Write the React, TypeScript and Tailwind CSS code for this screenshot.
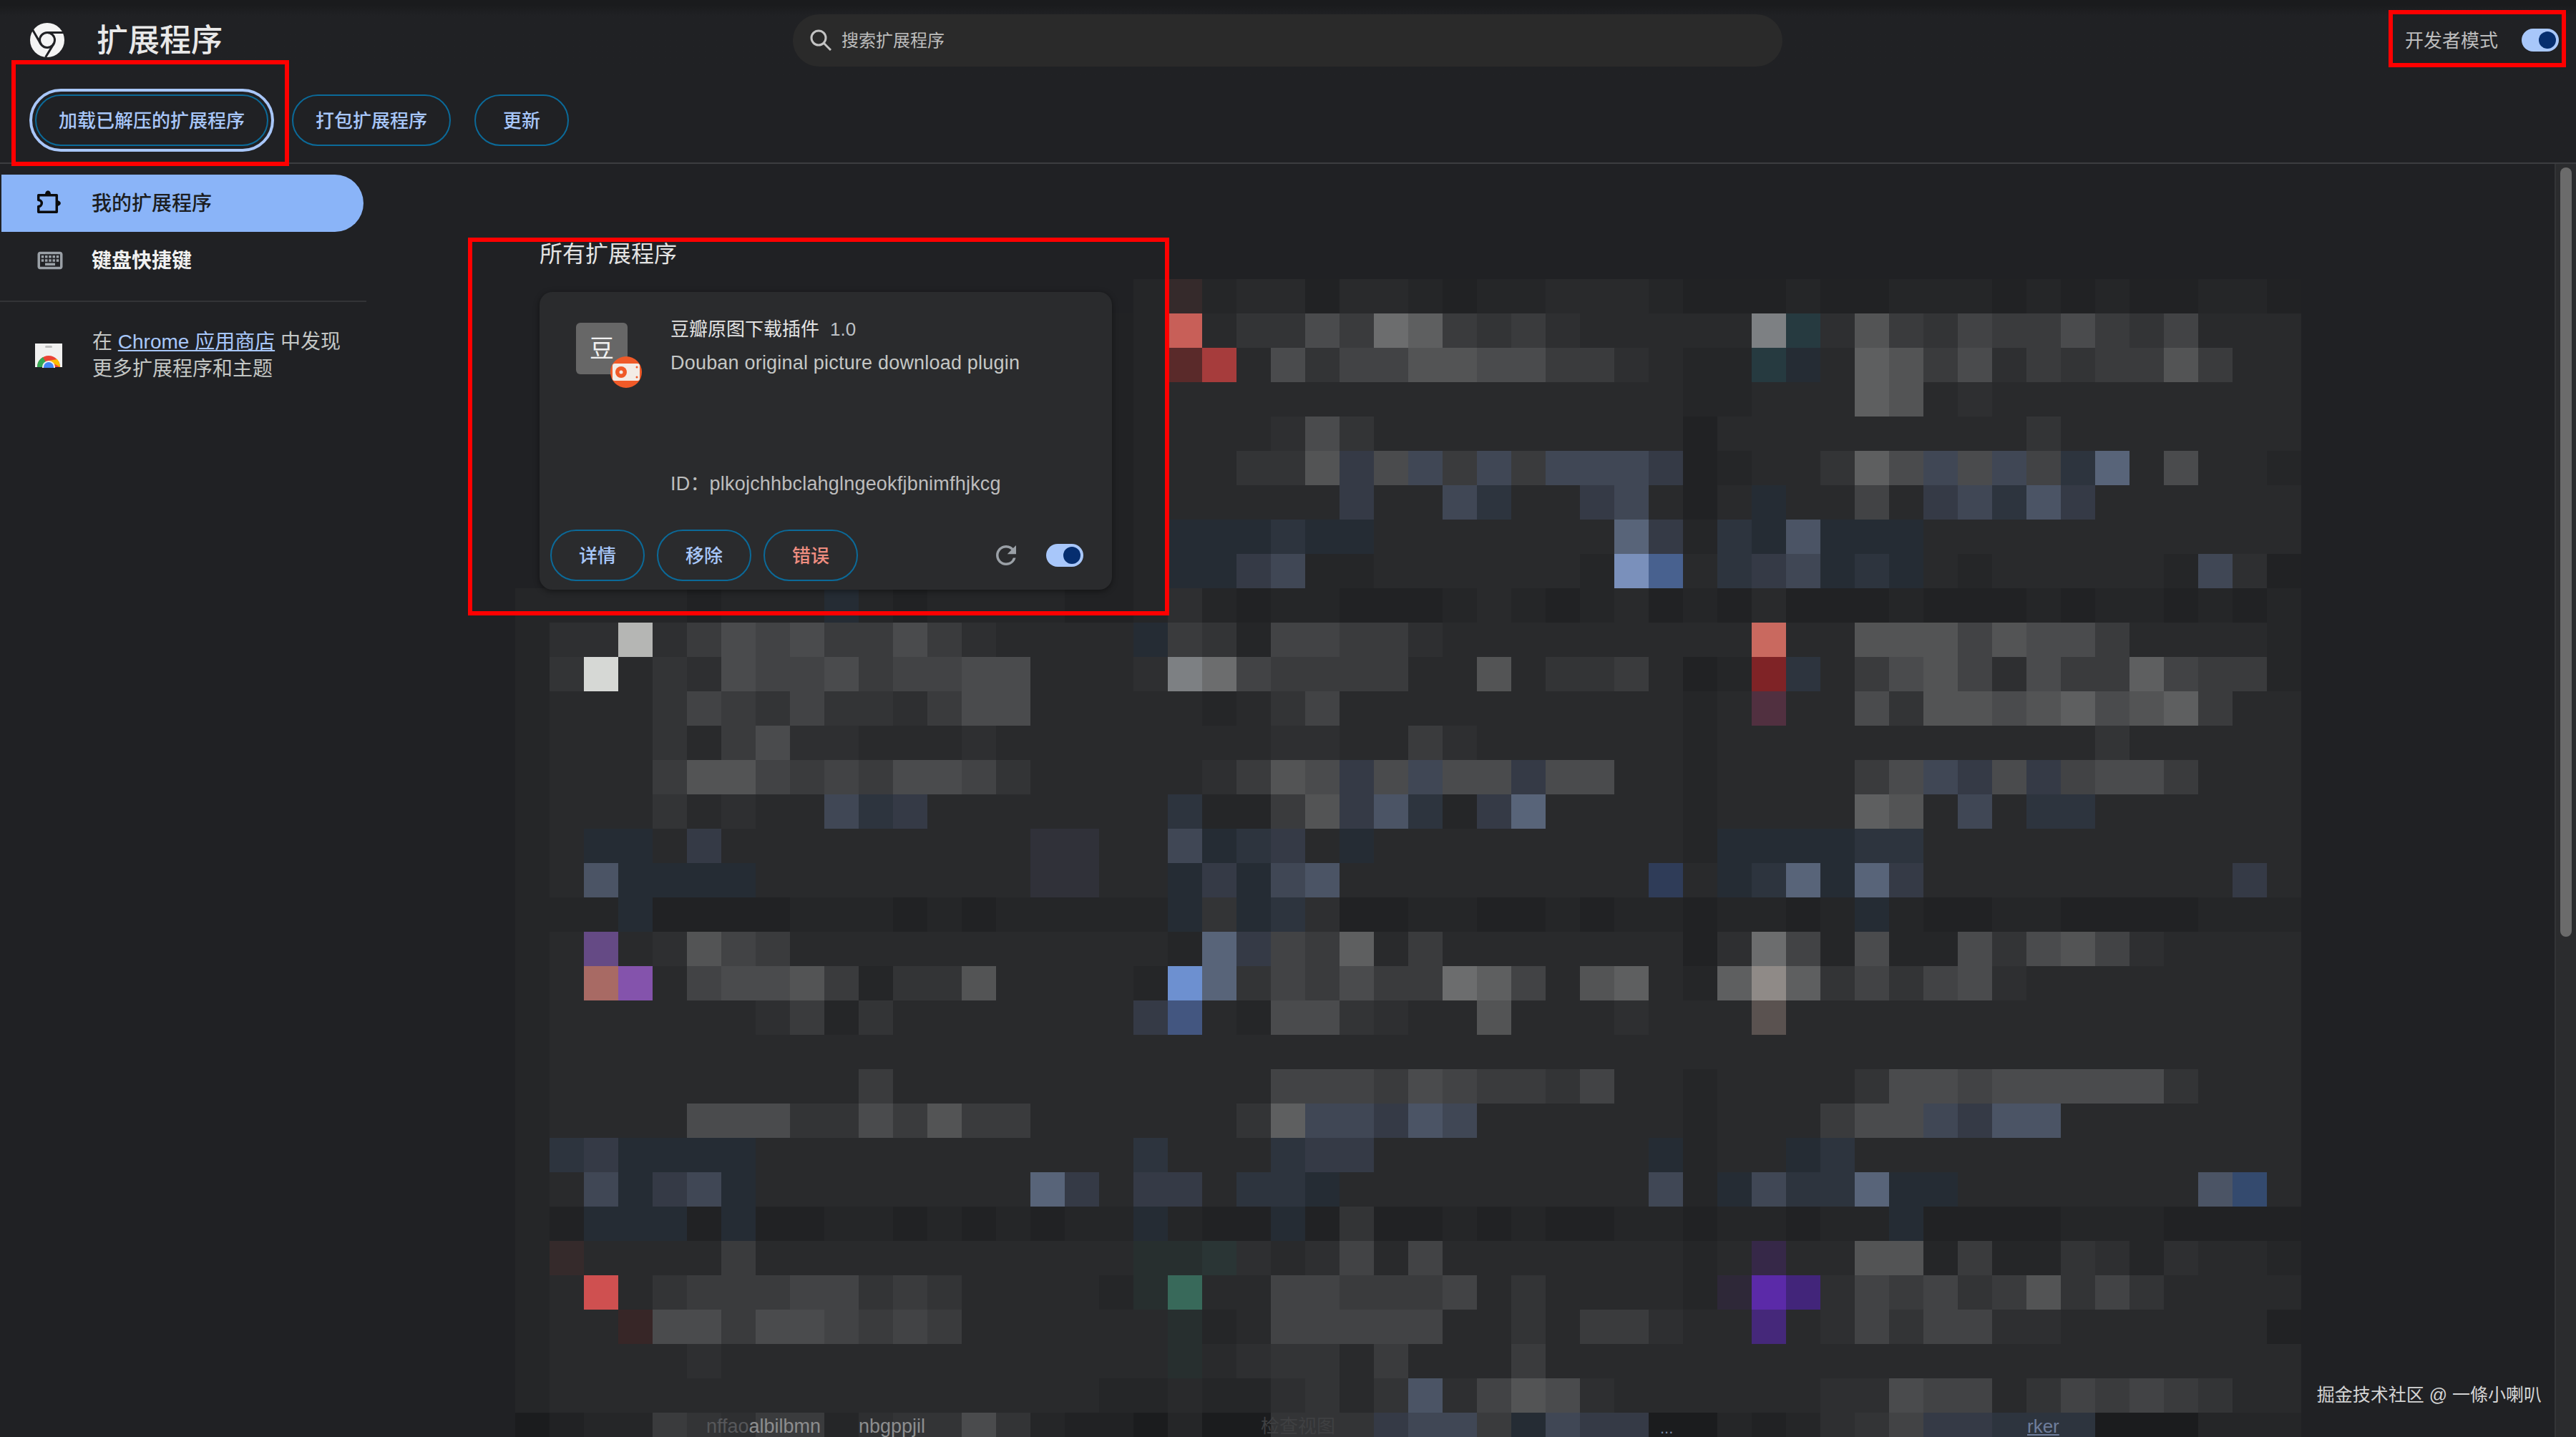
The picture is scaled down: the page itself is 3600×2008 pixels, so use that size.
const palette: Record<string, string> = {
  ".": "#292a2c", ",": "#252628", "-": "#212224", _: "#1b1c1e",
  "1": "#2e2f31", "2": "#333436", "3": "#3a3b3d", "4": "#424345", "5": "#4a4b4d",
  "6": "#535455", "7": "#5e5f60", "8": "#6c6d6e", "9": "#7d8083",
  a: "#252c34", b: "#2d343e", c: "#353a46", d: "#404755", e: "#4b5465", f: "#586479",
  h: "#7a90bb", i: "#48618f", j: "#6d90d0", o: "#303139",
  R: "#352a2b", S: "#c85f58", T: "#5a2a2a", U: "#a63c3c", I: "#2f3c58", J: "#435680",
  K: "#272f2f", L: "#2a3535", M: "#38695a", N: "#2e2838", O: "#263a40", P: "#c9695f",
  Q: "#7f2326", V: "#513040", W: "#8f8a87", X: "#5a5250", Y: "#344a6e", Z: "#362848",
  l: "#5b2aa8", m: "#42257a", n: "#45287a", A: "#a86a64", B: "#8453ac", C: "#cf5050",
  D: "#372627", E: "#b5b6b4", F: "#d6d8d5", G: "#654a85",
};

const hidden = " ".repeat(17) + "-,";

// pixelated backdrop, one string per 48px row, three chunks of columns
const mosaic: [string, string, string][] = [
  [" ".repeat(18) + ",", "R,..-..,-,,...,--", "-,--,,,-,-,--,,-"],
  [hidden, "S.2253873231.....", "9O16324335324..."],
  [hidden, "TU.52446655331.,,", "Oa.76351323363.."],
  [hidden, "...............,,", "...76.1........."],
  [hidden, "...152.........-.", "........2......."],
  [hidden, "..226c5d3d3dddc-,", "..275d5d4bf.5..,"],
  [hidden, ".....c..db..cd.-.", "a..4.cdbec......"],
  [hidden, "aaabaa.......fc,b", "aeaaa..........."],
  [hidden, "aacd,,......,hi.b", "cdaba.,.....,d1-"],
  [",,,,,-,,,a,-,,,,--,", "1,-,,---,.,-,.-,-", ".---,---,-,,-,-,"],
  [",11E1354533531....a", "32,44331.........", "P..66646553....,"],
  [",2F.21544534455...1", "9843333..6.223.-,", "Qb.356415337433,"],
  [",...24324221355....", ".,.24..........,.", "V..52665675673.."],
  [",...2.3511...1.....", "...11..31......,.", "..........2....."],
  [",...36643435542....", ".1365c5d55c55..,.", "...35dc5c4553..."],
  [",...2.1..dbc.......", "b,,36ceb,cf....,.", "...76.d.bb......"],
  [",.aa.c.........oo..", "dabc.a.........,a", "aaabb..........."],
  [",.eaaaa........oo..", "acade.........I.a", "bfafc.........c."],
  [",,,a----,,,-,-,,,,,", "a2ab1--,,--,-,,-,", ",-,a,--,,----,,,"],
  [",.G.1643...........", ",fc437.3.......-1", "84,5,,525641...."],
  [",.AB.45563,226....,", "jf243533874.67.,7", "W7242451........"],
  [",......13,2.......c", "J.,5521..6...1...", "X..............."],
  [",..................", ".................", "................"],
  [",.........3........", "...4443543324..,.", "...2554555552..."],
  [",....5552253633....", "..27ddced......,.", "..355dcee......."],
  [",bcaaaa...........b", "...bcc........a,.", ".ab............."],
  [",.dacda........fc.c", "c.bba.........d,a", "dbbfaa.......eY."],
  [",-aaa-a--,,-,-,-,,a", ",--a-2--,-,--,,-,", ",-,,a----,,,----"],
  [",R....3...........K", "KL1.14.4.......,.", "Z..66,3,,21,1..,"],
  [",.C.233344232....,K", "M..443334.2....,N", "lm1434236242...."],
  [",..D553554343......", "K,.44444..2.331..", "n.1424411......-"],
  [",....1.............", "K.122.3...3......", "................"],
  [",................,,", ".,,12.2e14651....", "..11544.243432.."],
  ["_-,,32133,12252,--_", ",__222cdd3adcc__,", "-,124ccbbb___,,,"],
];

function Mosaic() {
  return (
    <svg
      className="absolute left-[208px] top-[161px]"
      width={2496}
      height={1632}
      viewBox="0 0 2496 1632"
      shapeRendering="crispEdges"
    >
      {mosaic.map((chunks, r) =>
        chunks
          .join("")
          .split("")
          .map((ch, c) =>
            palette[ch] ? <rect key={`${r}-${c}`} x={c * 48} y={r * 48} width={48} height={48} fill={palette[ch]} /> : null
          )
      )}
    </svg>
  );
}

function ChromeLogo() {
  return (
    <svg width="48" height="48" viewBox="0 0 48 48" className="shrink-0">
      <circle cx="24" cy="24" r="24" fill="#f4f4f4" />
      <circle cx="24" cy="24" r="10.5" fill="#f4f4f4" stroke="#202124" strokeWidth="3" />
      <path d="M24 13.5H47M14.9 29.2 3.5 9.5M33.1 29.2 21.6 48" stroke="#202124" strokeWidth="3" fill="none" />
    </svg>
  );
}

function Toggle() {
  return (
    <div className="flex h-[32px] w-[52px] shrink-0 items-center justify-end rounded-full bg-[#a8c7fa] pr-[4px]">
      <div className="h-[24px] w-[24px] rounded-full bg-[#062e6f]" />
    </div>
  );
}

function PillButton({ label, red, ring }: { label: string; red?: boolean; ring?: boolean }) {
  return (
    <button
      className={`flex h-[72px] min-w-[132px] items-center justify-center rounded-[36px] border-2 border-[#0b6a99] px-[31px] pt-[2px] text-[26px] font-medium ${
        red ? "text-[#ee8d80]" : "text-[#a8c7fa]"
      } ${ring ? "outline-4 outline-offset-4 outline-[#a8c7fa]" : ""}`}
    >
      {label}
    </button>
  );
}

export default function App() {
  return (
    <div className="relative flex h-[2008px] w-[3600px] flex-col overflow-hidden bg-[#202124] font-['Liberation_Sans','Noto_Sans_CJK_SC',sans-serif]">
      {/* Header */}
      <div className="grid h-[112px] shrink-0 grid-cols-[1108px_1383px_1fr] items-center bg-linear-to-b from-[#1a1b1d] from-[6%] to-[#202124] to-[20%]">
        <div className="flex items-center gap-[45px] pl-[42px]">
          <ChromeLogo />
          <h1 className="pt-[2px] text-[44px] font-medium leading-none text-[#e8e8e8]">扩展程序</h1>
        </div>
        <div className="flex h-[73px] items-center gap-[14px] rounded-full bg-[#2a2a2a] pl-[24px]">
          <svg width="30" height="30" viewBox="0 0 30 30" fill="none" stroke="#c4c4c4" strokeWidth="3">
            <circle cx="12" cy="12" r="10" />
            <path d="M19 19 29 29" />
          </svg>
          <span className="pt-[2px] text-[24px] text-[#bdbdbd]">搜索扩展程序</span>
        </div>
        <div className="flex items-center justify-end gap-[33px] pr-[24px]">
          <span className="pt-[2px] text-[26px] text-[#bdbdbd]">开发者模式</span>
          <Toggle />
        </div>
      </div>

      {/* Toolbar */}
      <div className="flex h-[117px] shrink-0 gap-[33px] border-b-2 border-[#3c3d40] pl-[49px] pt-[20px]">
        <PillButton label="加载已解压的扩展程序" ring />
        <PillButton label="打包扩展程序" />
        <PillButton label="更新" />
      </div>

      <div className="flex min-h-0 flex-1">
        {/* Sidebar */}
        <aside className="w-[512px] shrink-0 pt-[15px]">
          <div className="ml-[2px] flex h-[80px] w-[506px] items-center gap-[37px] rounded-r-full bg-[#8ab4f8] pl-[47px]">
            <svg width="42" height="42" viewBox="0 0 24 24">
              <path d="M2.7 5.6H17.3V19H2.7V14.6a2.6 2.6 0 0 0 0-5.2Z" fill="none" stroke="#0b0c0e" strokeWidth="2" strokeLinejoin="round" />
              <path d="M8 5a2.3 3.2 0 0 1 4.6 0ZM17.3 9.7a3.2 2.3 0 0 1 0 4.6Z" fill="#0b0c0e" />
            </svg>
            <span className="pt-[2px] text-[28px] font-medium text-[#1c1d20]">我的扩展程序</span>
          </div>
          <div className="ml-[2px] flex h-[80px] w-[506px] items-center gap-[37px] pl-[47px]">
            <svg width="42" height="42" viewBox="0 0 24 24" fill="#9aa0a6">
              <path d="M20 7v10H4V7h16m0-2H4c-1.1 0-1.99.9-1.99 2L2 17c0 1.1.9 2 2 2h16c1.1 0 2-.9 2-2V7c0-1.1-.9-2-2-2zm-9 3h2v2h-2zm0 3h2v2h-2zM8 8h2v2H8zm0 3h2v2H8zm-3 0h2v2H5zm0-3h2v2H5zm3 6h8v2H8zm6-3h2v2h-2zm0-3h2v2h-2zm3 3h2v2h-2zm0-3h2v2h-2z" />
            </svg>
            <span className="pt-[2px] text-[28px] font-bold text-[#f1f1f1]">键盘快捷键</span>
          </div>
          <div className="mt-[16px] h-[2px] w-[512px] bg-[#333437]" />
          <div className="flex items-center gap-[42px] pl-[49px] pt-[37px]">
            <svg width="38" height="34" viewBox="0 0 38 34" className="shrink-0">
              <rect width="38" height="33" fill="#f1f1f1" />
              <rect x="14" y="3" width="10" height="3" rx="1.5" fill="#bdbdbd" />
              <path d="M3 33A16 16 0 0 1 35 33Z" fill="#ea4335" />
              <path d="M3 33A16 16 0 0 1 11 19L19 33Z" fill="#34a853" />
              <path d="M35 33A16 16 0 0 0 31 22L19 24Z" fill="#fbbc04" />
              <circle cx="19" cy="33" r="9" fill="#f1f1f1" />
              <circle cx="19" cy="33" r="7" fill="#4285f4" />
            </svg>
            <p className="text-[28px] leading-[38px] text-[#c4c7c5]">
              在 <span className="text-[#a8c7fa] underline">Chrome 应用商店</span> 中发现
              <br />
              更多扩展程序和主题
            </p>
          </div>
        </aside>

        {/* Main column */}
        <main className="relative flex-1 pl-[242px] pt-[106px]">
          <Mosaic />
          <h2 className="relative text-[32px] leading-[40px] text-[#e3e3e3]">所有扩展程序</h2>
          <div className="relative mt-[33px] flex h-[416px] w-[800px] flex-col rounded-[18px] bg-[#2a2b2d] shadow-[0_2px_8px_rgba(0,0,0,0.45)]">
            <div className="flex flex-1 gap-[60px] pb-[49px] pl-[51px] pt-[37px]">
              <div className="relative mt-[6px] h-[72px] w-[72px] shrink-0">
                <div className="flex h-full w-full items-center justify-center rounded-[6px] bg-[#676767] text-[34px] text-[#f0f0f0]">
                  豆
                </div>
                <svg width="44" height="44" viewBox="0 0 44 44" className="absolute left-[48px] top-[47px]">
                  <circle cx="22" cy="22" r="22" fill="#f05a28" />
                  <rect x="3" y="10" width="38" height="24" rx="3" fill="#f3ece6" />
                  <circle cx="15" cy="22" r="8" fill="#f05a28" />
                  <circle cx="15" cy="22" r="2.5" fill="#f3ece6" />
                  <circle cx="37" cy="15" r="1.5" fill="#f05a28" />
                  <circle cx="37" cy="29" r="1.5" fill="#f05a28" />
                </svg>
              </div>
              <div className="flex flex-col">
                <div className="flex h-[30px] items-center gap-[15px] text-[26px]">
                  <span className="text-[#e3e3e3]">豆瓣原图下载插件</span>
                  <span className="text-[#bdc1c6]">1.0</span>
                </div>
                <p className="mt-[17px] h-[30px] text-[27px] leading-[30px] tracking-[0.2px] text-[#c4c7c5]">
                  Douban original picture download plugin
                </p>
                <p className="mt-auto h-[30px] text-[27px] leading-[30px] tracking-[0.2px] text-[#bdbdbd]">
                  ID：plkojchhbclahglngeokfjbnimfhjkcg
                </p>
              </div>
            </div>
            <div className="flex items-center pb-[12px] pl-[15px] pr-[40px]">
              <div className="flex gap-[17px]">
                <PillButton label="详情" />
                <PillButton label="移除" />
                <PillButton label="错误" red />
              </div>
              <svg width="42" height="42" viewBox="0 0 24 24" fill="#9aa0a6" className="ml-auto mr-[35px]">
                <path d="M17.65 6.35A7.958 7.958 0 0 0 12 4c-4.42 0-7.99 3.58-7.99 8s3.57 8 7.99 8c3.73 0 6.84-2.55 7.73-6h-2.08A5.99 5.99 0 0 1 12 18c-3.31 0-6-2.69-6-6s2.69-6 6-6c1.66 0 3.14.69 4.22 1.78L13 11h7V4l-2.35 2.35z" />
              </svg>
              <Toggle />
            </div>
          </div>

          {/* Text from the next cards, cut off by the window */}
          <span className="absolute left-[475px] top-[1750px] text-[27px] leading-[28px] text-[#8c8d8e]">
            <span className="text-[#56575a]">nffao</span>albilbmn
          </span>
          <span className="absolute left-[688px] top-[1750px] text-[27px] leading-[28px] text-[#8c8d8e]">nbgppjil</span>
          <span className="absolute left-[1250px] top-[1750px] text-[26px] leading-[28px] text-[#3f4042]">检查视图</span>
          <span className="absolute left-[1808px] top-[1756px] text-[22px] leading-[22px] text-[#7c8ba8]">...</span>
          <span className="absolute left-[2321px] top-[1750px] text-[26px] leading-[28px] text-[#6f7e9c] underline">rker</span>
        </main>

        {/* Scrollbar */}
        <div className="w-[30px] shrink-0 border-l-2 border-[#333437] bg-[#2b2c2e] pl-[6px] pt-[5px]">
          <div className="h-[1075px] w-[16px] rounded-full bg-[#6b6b6b]" />
        </div>
      </div>

      <span className="absolute right-[48px] top-[1933px] text-[25px] leading-[32px] text-[#d4d4d4]">掘金技术社区 @ 一條小喇叭</span>

      {/* Red annotation boxes */}
      <div className="absolute left-[16px] top-[84px] h-[148px] w-[388px] border-[6px] border-[#ff0000]" />
      <div className="absolute left-[654px] top-[332px] h-[528px] w-[980px] border-[6px] border-[#ff0000]" />
      <div className="absolute left-[3338px] top-[14px] h-[80px] w-[248px] border-[6px] border-[#ff0000]" />
    </div>
  );
}
